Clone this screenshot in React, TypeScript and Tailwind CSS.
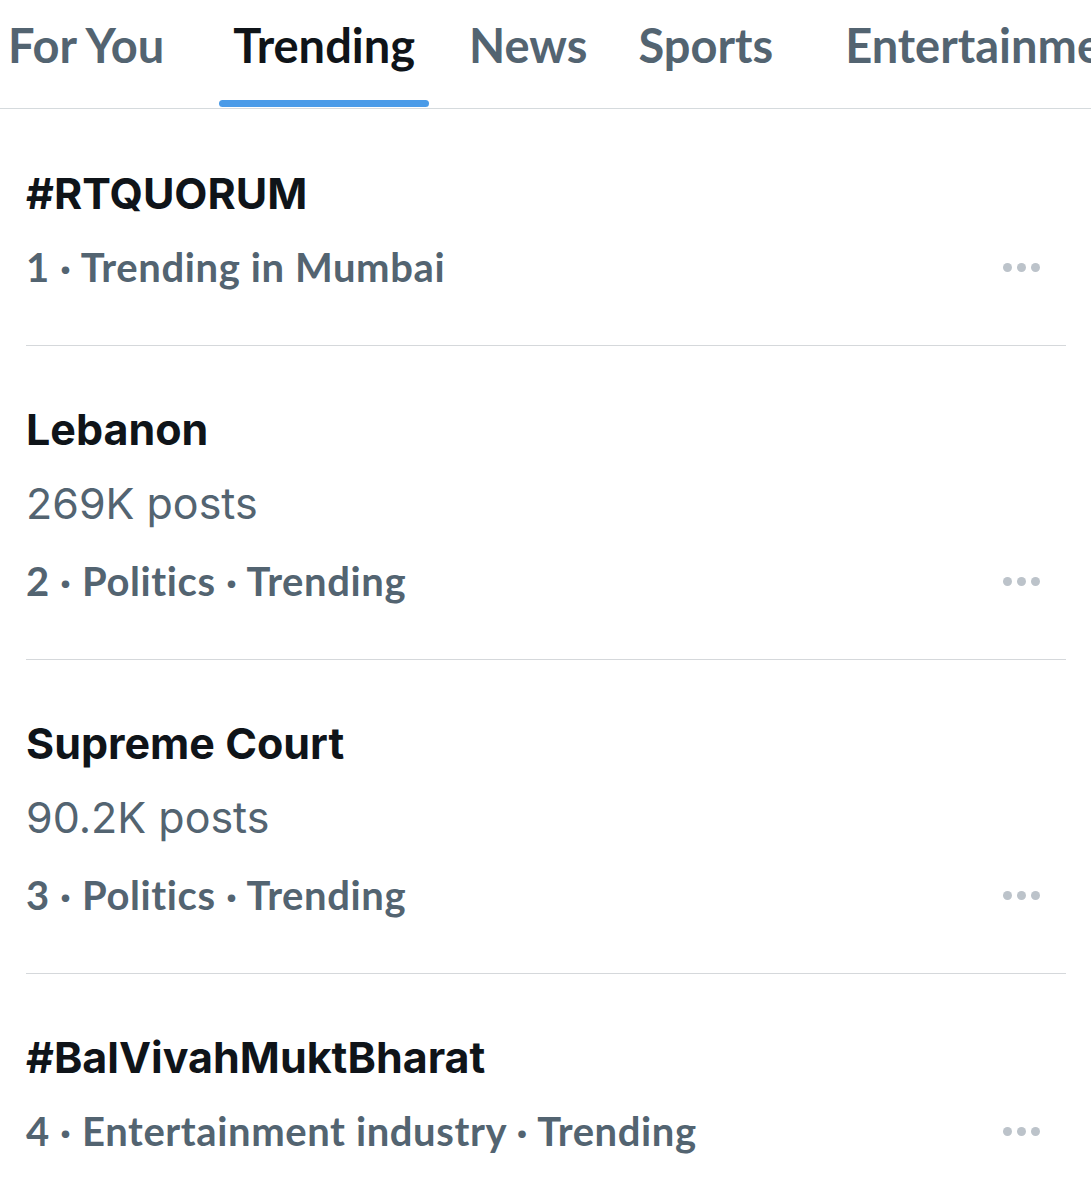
import React from "react";

const tabs = [
  { label: "For You", ml: "ml-[8px]" },
  { label: "Trending", ml: "ml-[69px]", active: true },
  { label: "News", ml: "ml-[54px]" },
  { label: "Sports", ml: "ml-[51px]" },
  { label: "Entertainment", ml: "ml-[72px]" },
];

type Trend = { title: string; posts?: string; meta: string };

const trends: Trend[] = [
  { title: "#RTQUORUM", meta: "1 · Trending in Mumbai" },
  { title: "Lebanon", posts: "269K posts", meta: "2 · Politics · Trending" },
  { title: "Supreme Court", posts: "90.2K posts", meta: "3 · Politics · Trending" },
  { title: "#BalVivahMuktBharat", meta: "4 · Entertainment industry · Trending" },
];

function Dots() {
  return (
    <div className="flex items-center gap-[5px] mr-[26px]">
      <span className="block w-[9px] h-[9px] rounded-full bg-[#bcc3ca]" />
      <span className="block w-[9px] h-[9px] rounded-full bg-[#bcc3ca]" />
      <span className="block w-[9px] h-[9px] rounded-full bg-[#bcc3ca]" />
    </div>
  );
}

export default function App() {
  const title = "font-['Inter','Liberation_Sans',sans-serif] font-bold text-[43px] leading-[69px] text-[#0f1419]";
  const posts = "font-['Inter','Liberation_Sans',sans-serif] font-normal text-[43px] leading-[78px] text-[#536471]";
  const meta = "font-['Lato','Liberation_Sans',sans-serif] font-bold text-[40px] leading-[78px] tracking-[0.6px] text-[#536471]";
  return (
    <div className="w-[1091px] h-[1200px] bg-white overflow-hidden">
      <div className="flex items-end h-[109px] border-b border-[#d5dadd] overflow-hidden whitespace-nowrap">
        {tabs.map((t) => (
          <div key={t.label} className={`${t.ml} relative flex flex-col items-center shrink-0`}>
            <span
              className={`font-['Lato','Liberation_Sans',sans-serif] font-bold text-[47px] leading-[56px] ${
                t.active ? "text-[#0f1419]" : "text-[#536471]"
              }`}
            >
              {t.label}
            </span>
            <div className="h-[35px] w-full relative">
              {t.active && (
                <div className="absolute bottom-[1px] left-[-14px] right-[-14px] h-[7px] rounded-full bg-[#4a9be8]" />
              )}
            </div>
          </div>
        ))}
      </div>
      <div>
        {trends.map((tr, i) => (
          <div key={tr.title} className={`ml-[26px] mr-[25px] ${i < trends.length - 1 ? "border-b border-[#d5d8db]" : ""}`}>
            <div className={`${i === 0 ? "pt-[50px]" : "pt-[49px]"} pb-[39px]`}>
              <div className={title}>{tr.title}</div>
              {tr.posts && <div className={posts}>{tr.posts}</div>}
              <div className="flex items-center justify-between">
                <div className={meta}>{tr.meta}</div>
                <Dots />
              </div>
            </div>
          </div>
        ))}
      </div>
    </div>
  );
}
